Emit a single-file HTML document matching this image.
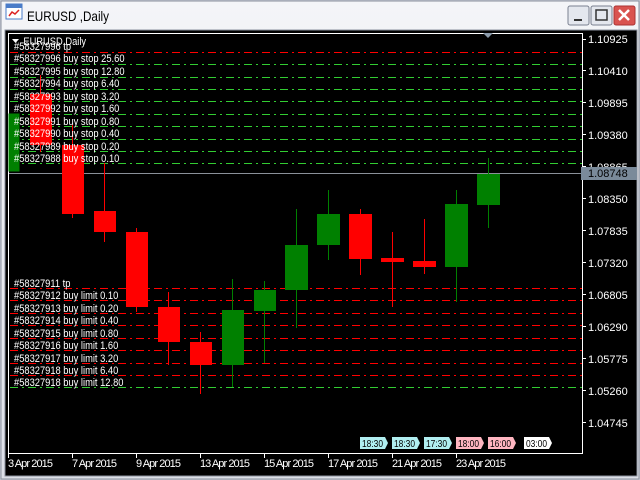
<!DOCTYPE html>
<html><head><meta charset="utf-8"><style>
html,body{margin:0;padding:0;width:640px;height:480px;overflow:hidden;background:#d4d0c8}
svg{display:block}
text{font-family:"Liberation Sans",sans-serif}
</style></head><body>
<svg width="640" height="480" xmlns="http://www.w3.org/2000/svg">
<defs><linearGradient id="tb" x1="0" y1="0" x2="0" y2="1"><stop offset="0" stop-color="#f4f5f8"/><stop offset="1" stop-color="#dcdfe8"/></linearGradient></defs>
<rect x="0" y="0" width="640" height="480" fill="#c8ccd8"/>
<rect x="1" y="1" width="638" height="478" fill="url(#tb)" stroke="#8a909c"/>
<rect x="6" y="4" width="16" height="15" fill="#fff" stroke="#4a7cc8"/>
<rect x="6" y="4" width="16" height="4" fill="#4a7cc8"/>
<polyline points="9,16 12,12 15,14 19,10" fill="none" stroke="#d22" stroke-width="1.5"/>
<text x="27" y="21" font-size="14" fill="#000" textLength="82" lengthAdjust="spacingAndGlyphs">EURUSD ,Daily</text>
<g stroke="#7a8090" fill="#e4e7ee"><rect x="568" y="6" width="21" height="19" rx="2"/><rect x="591" y="6" width="21" height="19" rx="2"/></g>
<rect x="614" y="6" width="21" height="19" rx="2" fill="#d9534f" stroke="#a33"/>
<rect x="574" y="19" width="8" height="2" fill="#333"/>
<rect x="596" y="10" width="11" height="10" fill="none" stroke="#333" stroke-width="1.5"/>
<path d="M619 10l10 10M629 10l-10 10" stroke="#fff" stroke-width="2.5"/>
<rect x="5" y="30" width="632" height="446" fill="#000" stroke="#8a909c"/>
<rect x="8.5" y="33.5" width="574" height="420" fill="none" stroke="#fff"/>
<path d="M483 33h10l-5 5z" fill="#8a9aaa"/>
<g stroke-width="1" fill="none" stroke-dasharray="8,4,2,4">
<path d="M10 52.5H582" stroke="#ff0000"/>
<path d="M10 64.5H582M10 77.5H582M10 89.5H582M10 101.5H582M10 114.5H582M10 126.5H582M10 139.5H582M10 151.5H582M10 163.5H582" stroke="#32cd32"/>
<path d="M10 288.5H582M10 300.5H582M10 313.5H582M10 325.5H582M10 338.5H582M10 350.5H582M10 363.5H582M10 375.5H582" stroke="#ff0000"/>
<path d="M10 387.5H582" stroke="#32cd32"/>
</g>
<path d="M9 173.5H582" stroke="#8a9099"/>
<g stroke-width="1">
<g fill="#008000" stroke="#008000"><rect x="9" y="114" width="10" height="57"/></g>
<g fill="#ff0000" stroke="none">
<rect x="40" y="75" width="1" height="77"/><rect x="30" y="94" width="22" height="51"/>
<rect x="72" y="125" width="1" height="93"/><rect x="62" y="145" width="22" height="69"/>
<rect x="104" y="163" width="1" height="79"/><rect x="94" y="211" width="22" height="21"/>
<rect x="136" y="228" width="1" height="84"/><rect x="126" y="232" width="22" height="75"/>
<rect x="168" y="292" width="1" height="73"/><rect x="158" y="307" width="22" height="35"/>
<rect x="200" y="332" width="1" height="62"/><rect x="190" y="342" width="22" height="23"/>
<rect x="360" y="209" width="1" height="66"/><rect x="349" y="214" width="23" height="45"/>
<rect x="392" y="232" width="1" height="75"/><rect x="381" y="258" width="23" height="4"/>
<rect x="424" y="219" width="1" height="55"/><rect x="413" y="261" width="23" height="6"/>
</g>
<g fill="#008000" stroke="none">
<rect x="232" y="279" width="1" height="108"/><rect x="222" y="310" width="22" height="55"/>
<rect x="264" y="281" width="1" height="82"/><rect x="254" y="290" width="22" height="21"/>
<rect x="296" y="209" width="1" height="119"/><rect x="285" y="245" width="23" height="45"/>
<rect x="328" y="190" width="1" height="70"/><rect x="317" y="214" width="23" height="31"/>
<rect x="456" y="190" width="1" height="112"/><rect x="445" y="204" width="23" height="63"/>
<rect x="488" y="158" width="1" height="70"/><rect x="477" y="174" width="23" height="31"/>
</g>
</g>
<path d="M12 39h7l-3.5 4z" fill="#fff"/>
<g font-size="11" fill="#fff" transform="matrix(0.85,0,0,1,14,0)">
<text x="11" y="45">EURUSD,Daily</text>
<text x="0" y="50">#58327996 tp</text>
<text x="0" y="62">#58327996 buy stop 25.60</text>
<text x="0" y="75">#58327995 buy stop 12.80</text>
<text x="0" y="87">#58327994 buy stop 6.40</text>
<text x="0" y="100">#58327993 buy stop 3.20</text>
<text x="0" y="112">#58327992 buy stop 1.60</text>
<text x="0" y="125">#58327991 buy stop 0.80</text>
<text x="0" y="137">#58327990 buy stop 0.40</text>
<text x="0" y="150">#58327989 buy stop 0.20</text>
<text x="0" y="162">#58327988 buy stop 0.10</text>
<text x="0" y="287">#58327911 tp</text>
<text x="0" y="299">#58327912 buy limit 0.10</text>
<text x="0" y="312">#58327913 buy limit 0.20</text>
<text x="0" y="324">#58327914 buy limit 0.40</text>
<text x="0" y="337">#58327915 buy limit 0.80</text>
<text x="0" y="349">#58327916 buy limit 1.60</text>
<text x="0" y="362">#58327917 buy limit 3.20</text>
<text x="0" y="374">#58327918 buy limit 6.40</text>
<text x="0" y="386">#58327918 buy limit 12.80</text>
</g>
<g font-size="11" fill="#fff" stroke="none">
<text x="588" y="43">1.10925</text><text x="588" y="75">1.10410</text><text x="588" y="107">1.09895</text><text x="588" y="139">1.09380</text><text x="588" y="171">1.08865</text><text x="588" y="203">1.08350</text><text x="588" y="235">1.07835</text><text x="588" y="267">1.07320</text><text x="588" y="299">1.06805</text><text x="588" y="331">1.06290</text><text x="588" y="363">1.05775</text><text x="588" y="395">1.05260</text><text x="588" y="427">1.04745</text>
</g>
<path d="M582 39.5h4M582 70.5h4M582 102.5h4M582 134.5h4M582 166.5h4M582 198.5h4M582 230.5h4M582 262.5h4M582 294.5h4M582 326.5h4M582 358.5h4M582 390.5h4M582 422.5h4" stroke="#fff"/>
<rect x="581" y="167" width="56" height="13" fill="#7a8a9a"/>
<text x="588" y="177" font-size="11" fill="#000">1.08748</text>
<path d="M8.5 453v5M72.5 453v5M136.5 453v5M200.5 453v5M264.5 453v5M328.5 453v5M392.5 453v5M456.5 453v5" stroke="#fff"/>
<g font-size="11" fill="#fff" lengthAdjust="spacingAndGlyphs">
<text x="8" y="467" textLength="45">3 Apr 2015</text><text x="72" y="467" textLength="45">7 Apr 2015</text><text x="136" y="467" textLength="45">9 Apr 2015</text><text x="200" y="467" textLength="50">13 Apr 2015</text><text x="264" y="467" textLength="50">15 Apr 2015</text><text x="328" y="467" textLength="50">17 Apr 2015</text><text x="392" y="467" textLength="50">21 Apr 2015</text><text x="456" y="467" textLength="50">23 Apr 2015</text>
</g>
<g font-size="10" fill="#000">
<path d="M360 437h25l3 6-3 6h-25z" fill="#b0eef0"/><text x="362" y="447" textLength="21" lengthAdjust="spacingAndGlyphs">18:30</text>
<path d="M392 437h25l3 6-3 6h-25z" fill="#b0eef0"/><text x="394" y="447" textLength="21" lengthAdjust="spacingAndGlyphs">18:30</text>
<path d="M424 437h25l3 6-3 6h-25z" fill="#b0eef0"/><text x="426" y="447" textLength="21" lengthAdjust="spacingAndGlyphs">17:30</text>
<path d="M456 437h25l3 6-3 6h-25z" fill="#ffb6c1"/><text x="458" y="447" textLength="21" lengthAdjust="spacingAndGlyphs">18:00</text>
<path d="M488 437h25l3 6-3 6h-25z" fill="#ffb6c1"/><text x="490" y="447" textLength="21" lengthAdjust="spacingAndGlyphs">16:00</text>
<path d="M524 437h25l3 6-3 6h-25z" fill="#fff"/><text x="526" y="447" textLength="21" lengthAdjust="spacingAndGlyphs">03:00</text>
</g>
</svg>
</body></html>
